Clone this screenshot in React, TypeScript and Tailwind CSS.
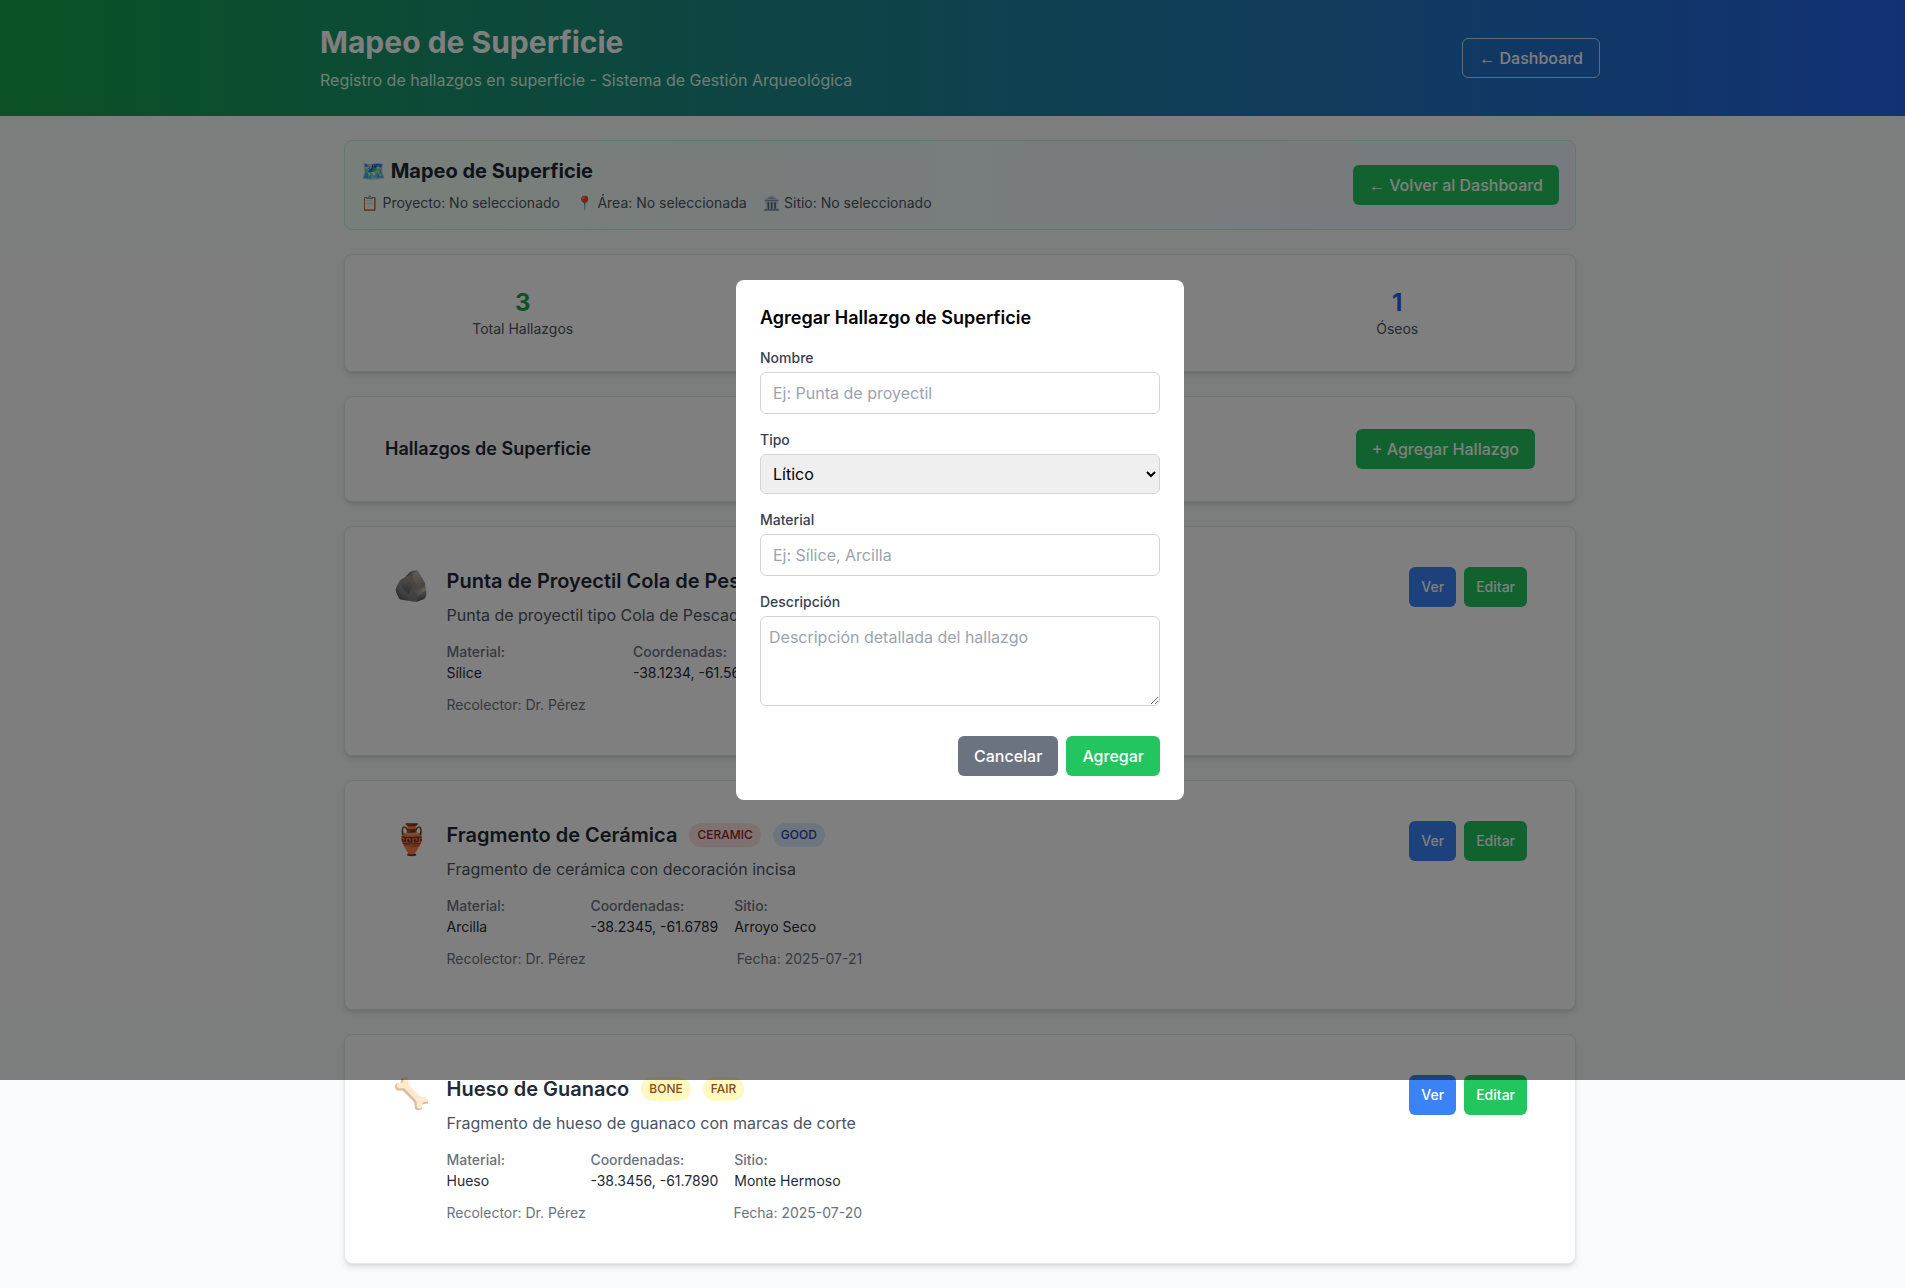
import React from 'react';

type Finding = {
  icon: string;
  name: string;
  desc: string;
  badges: { label: string; className: string }[];
  material: string;
  coords: string;
  site: string;
  date: string;
};

const findings: Finding[] = [
  {
    icon: '🪨',
    name: 'Punta de Proyectil Cola de Pescado',
    desc: 'Punta de proyectil tipo Cola de Pescado',
    badges: [
      { label: 'PROJECTILE', className: 'mr-1 bg-[#f3f4f6] text-[#1f2937]' },
      { label: 'EXCELLENT', className: 'bg-[#dcfce7] text-[#166534]' },
    ],
    material: 'Sílice',
    coords: '-38.1234, -61.5678',
    site: 'Laguna de los Padres',
    date: '2025-07-22',
  },
  {
    icon: '🏺',
    name: 'Fragmento de Cerámica',
    desc: 'Fragmento de cerámica con decoración incisa',
    badges: [
      { label: 'CERAMIC', className: 'bg-[#fee2e2] text-[#991b1b]' },
      { label: 'GOOD', className: 'bg-[#dbeafe] text-[#1e40af]' },
    ],
    material: 'Arcilla',
    coords: '-38.2345, -61.6789',
    site: 'Arroyo Seco',
    date: '2025-07-21',
  },
  {
    icon: '🦴',
    name: 'Hueso de Guanaco',
    desc: 'Fragmento de hueso de guanaco con marcas de corte',
    badges: [
      { label: 'BONE', className: 'bg-[#fef9c3] text-[#854d0e]' },
      { label: 'FAIR', className: 'bg-[#fef9c3] text-[#854d0e]' },
    ],
    material: 'Hueso',
    coords: '-38.3456, -61.7890',
    site: 'Monte Hermoso',
    date: '2025-07-20',
  },
];

const stats = [
  { value: '3', label: 'Total Hallazgos', className: 'text-[#16a34a]' },
  { value: '1', label: 'Líticos', className: 'text-[#dc2626]' },
  { value: '1', label: 'Cerámicos', className: 'text-[#ca8a04]' },
  { value: '1', label: 'Óseos', className: 'text-[#2563eb]' },
];

function FindingCard({ item }: { item: Finding }) {
  return (
    <div className="bg-white border border-[#e5e7eb] rounded-lg shadow-md px-12 py-10 flex items-start justify-between">
      <div className="flex items-start gap-[16.5px]">
        <div className="text-3xl leading-9">{item.icon}</div>
        <div>
          <div className="flex items-center gap-3 mb-2">
            <h3 className="text-xl font-semibold text-[#1f2937]">{item.name}</h3>
            {item.badges.map((b) => (
              <span key={b.label} className={`px-2 py-1 rounded-full text-xs font-medium ${b.className}`}>
                {b.label}
              </span>
            ))}
          </div>
          <p className="text-[#4b5563] mb-[15px]">{item.desc}</p>
          <div className="grid grid-cols-3 gap-x-4 text-sm">
            <div>
              <div className="text-[#6b7280] font-medium mb-px">Material:</div>
              <div className="text-[#1f2937]">{item.material}</div>
            </div>
            <div>
              <div className="text-[#6b7280] font-medium mb-px">Coordenadas:</div>
              <div className="text-[#1f2937]">{item.coords}</div>
            </div>
            <div>
              <div className="text-[#6b7280] font-medium mb-px">Sitio:</div>
              <div className="text-[#1f2937]">{item.site}</div>
            </div>
          </div>
          <div className="flex justify-between mt-3 text-sm text-[#6b7280]">
            <span>Recolector: Dr. Pérez</span>
            <span>Fecha: {item.date}</span>
          </div>
        </div>
      </div>
      <div className="flex gap-2">
        <button className="bg-[#3b82f6] text-white text-sm font-medium px-3 py-2 leading-6 rounded-md">Ver</button>
        <button className="bg-[#22c55e] text-white text-sm font-medium px-3 py-2 leading-6 rounded-md">Editar</button>
      </div>
    </div>
  );
}

function AddModal() {
  const input = 'w-full border border-[#d1d5db] rounded-md px-3 py-2 text-base placeholder:text-[#9ca3af]';
  const label = 'block text-sm font-medium text-[#374151] mb-1';
  return (
    <div className="absolute top-0 left-0 w-[1920px] h-[1080px] bg-black/50 flex items-center justify-center">
      <div className="bg-white rounded-lg p-6 w-[448px]">
        <h3 className="text-lg font-semibold text-black mb-4">Agregar Hallazgo de Superficie</h3>
        <div className="mb-4">
          <label className={label}>Nombre</label>
          <input className={input} placeholder="Ej: Punta de proyectil" />
        </div>
        <div className="mb-4">
          <label className={label}>Tipo</label>
          <select className="w-full h-10 border border-[#d1d5db] rounded-md px-2 bg-[#efefef] text-black text-base">
            <option>Lítico</option>
          </select>
        </div>
        <div className="mb-4">
          <label className={label}>Material</label>
          <input className={input} placeholder="Ej: Sílice, Arcilla" />
        </div>
        <div>
          <label className={label}>Descripción</label>
          <textarea
            rows={3}
            className="block w-full border border-[#d1d5db] rounded-md px-2 py-2 text-base placeholder:text-[#9ca3af]"
            placeholder="Descripción detallada del hallazgo"
          />
        </div>
        <div className="flex justify-end gap-2 mt-[30px]">
          <button className="bg-[#6b7280] text-white font-medium px-4 py-2 rounded-md">Cancelar</button>
          <button className="bg-[#22c55e] text-white font-medium px-4 py-2 rounded-md">Agregar</button>
        </div>
      </div>
    </div>
  );
}

export default function App() {
  return (
    <div className="w-full h-[1288px] overflow-hidden font-['Inter',sans-serif]">
      <div className="relative w-[1920px] h-[1288px] bg-[#f9fafb]">
        {/* Header */}
        <header className="bg-linear-to-r/srgb from-[#16a34a] to-[#2563eb] text-white">
          <div className="max-w-7xl mx-auto py-6 flex items-center justify-between">
            <div>
              <h1 className="text-3xl font-bold">Mapeo de Superficie</h1>
              <p className="mt-2 text-[#dcfce7]">Registro de hallazgos en superficie - Sistema de Gestión Arqueológica</p>
            </div>
            <button className="h-10 border border-white/70 rounded-md px-4 font-medium">
              <span className="font-['Liberation_Sans']">←</span> Dashboard
            </button>
          </div>
        </header>

        <main className="max-w-7xl mx-auto px-6 py-6 flex flex-col gap-6">
          {/* Context */}
          <div className="bg-linear-to-r/srgb from-[#f0fdf4] to-[#eff6ff] border border-[#bbf7d0] rounded-lg p-4 flex items-center justify-between">
            <div>
              <h2 className="text-xl font-bold text-[#1f2937] mb-2">🗺️ Mapeo de Superficie</h2>
              <div className="flex gap-4 text-sm text-[#4b5563]">
                <span><span className="mr-[0.5px]">📋</span> Proyecto: No seleccionado</span>
                <span><span className="mr-[0.5px]">📍</span> Área: No seleccionada</span>
                <span><span className="mr-[0.5px]">🏛️</span> Sitio: No seleccionado</span>
              </div>
            </div>
            <button className="h-10 bg-[#22c55e] text-white font-medium px-4 rounded-md">
              <span className="font-['Liberation_Sans']">←</span> Volver al Dashboard
            </button>
          </div>

          {/* Stats */}
          <div className="bg-white border border-[#e5e7eb] rounded-lg shadow-md p-8 grid grid-cols-4">
            {stats.map((s) => (
              <div key={s.label} className="text-center">
                <div className={`text-2xl font-bold ${s.className}`}>{s.value}</div>
                <div className="text-sm text-[#4b5563]">{s.label}</div>
              </div>
            ))}
          </div>

          {/* Section title */}
          <div className="bg-white border border-[#e5e7eb] rounded-lg shadow-md px-10 py-8 flex items-center justify-between">
            <h3 className="text-lg font-semibold text-[#1f2937]">Hallazgos de Superficie</h3>
            <button className="bg-[#22c55e] text-white font-medium px-4 py-2 rounded-md">+ Agregar Hallazgo</button>
          </div>

          {findings.map((f) => (
            <FindingCard key={f.name} item={f} />
          ))}
        </main>

        <AddModal />
      </div>
    </div>
  );
}
